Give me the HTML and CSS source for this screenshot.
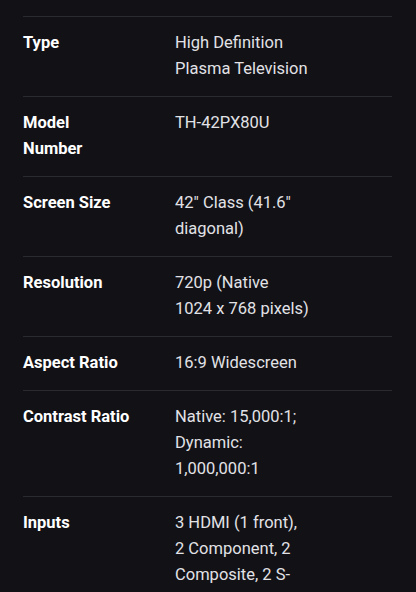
FILE: index.html
```html
<!DOCTYPE html>
<html lang="en">
<head>
    <meta charset="UTF-8">
    <meta name="viewport" content="width=device-width, initial-scale=1.0">
    <title>Specifications</title>
    <link rel="stylesheet" href="styles.css">
</head>
<body>

<div class="specs">
    <div class="spec-row">
        <div class="spec-label">Type</div>
        <div class="spec-value">High Definition Plasma Television</div>
    </div>
    <div class="spec-row">
        <div class="spec-label">Model Number</div>
        <div class="spec-value">TH-42PX80U</div>
    </div>
    <div class="spec-row">
        <div class="spec-label">Screen Size</div>
        <div class="spec-value">42" Class (41.6" diagonal)</div>
    </div>
    <div class="spec-row">
        <div class="spec-label">Resolution</div>
        <div class="spec-value">720p (Native<br>1024 x 768 pixels)</div>
    </div>
    <div class="spec-row">
        <div class="spec-label">Aspect Ratio</div>
        <div class="spec-value">16:9 Widescreen</div>
    </div>
    <div class="spec-row">
        <div class="spec-label">Contrast Ratio</div>
        <div class="spec-value">Native: 15,000:1; Dynamic: 1,000,000:1</div>
    </div>
    <div class="spec-row">
        <div class="spec-label">Inputs</div>
        <div class="spec-value">3 HDMI (1 front),<br>2 Component, 2 Composite, 2 S-Video</div>
    </div>
</div>

</body>
</html>
```

FILE: styles.css
```css
body {
    margin: 0;
    background-color: #111116;
    font-family: Roboto, "Noto Sans", sans-serif;
    font-size: 16.5px;
    line-height: 26px;
    font-feature-settings: "calt" 0;
}
.specs {
    padding: 16px 24px 0 23px;
}
.spec-row {
    display: grid;
    grid-template-columns: 152px 136px;
    border-top: 1px solid #2a2a31;
    padding: 13px 0 14px;
}
.spec-label {
    color: #ffffff;
    font-weight: 700;
    width: 108px;
}
.spec-value {
    color: #e2e2e6;
}
```
